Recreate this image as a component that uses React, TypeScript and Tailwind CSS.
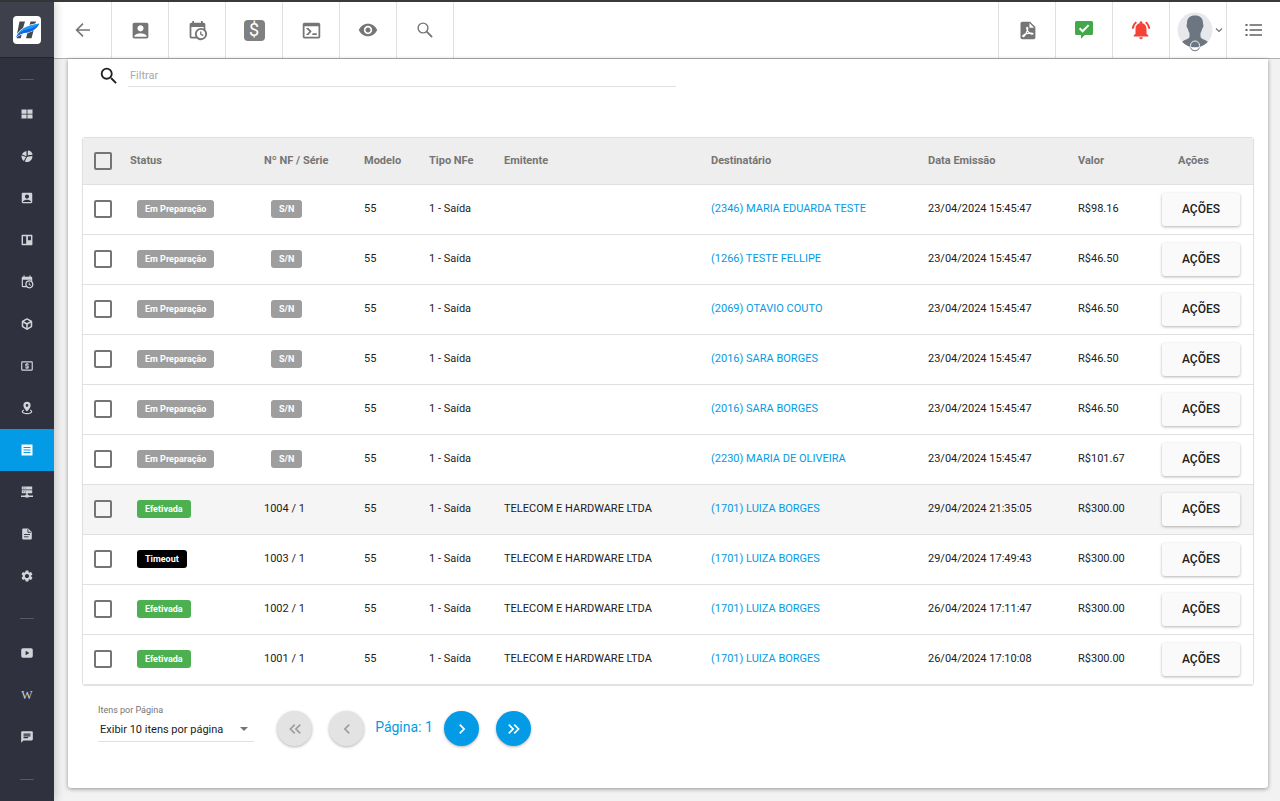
import React, { useState } from 'react';
import {
    MdAccountBox,
    MdChat,
    MdKeyboardArrowLeft,
    MdKeyboardArrowRight,
    MdKeyboardDoubleArrowLeft,
    MdKeyboardDoubleArrowRight,
    MdLocalAtm,
    MdNotificationsActive,
    MdRemoveRedEye,
    MdSearch,
    MdSettings,
} from 'react-icons/md';
import { FiBox } from 'react-icons/fi';

interface Invoice {
    id: number;
    status: 'Em Preparação' | 'Efetivada' | 'Timeout';
    number: string | null;
    issuer: string;
    recipient: string;
    date: string;
    value: string;
}

const ISSUER = 'TELECOM E HARDWARE LTDA';

const invoices: Invoice[] = [
    { id: 1, status: 'Em Preparação', number: null, issuer: '', recipient: '(2346) MARIA EDUARDA TESTE', date: '23/04/2024 15:45:47', value: 'R$98.16' },
    { id: 2, status: 'Em Preparação', number: null, issuer: '', recipient: '(1266) TESTE FELLIPE', date: '23/04/2024 15:45:47', value: 'R$46.50' },
    { id: 3, status: 'Em Preparação', number: null, issuer: '', recipient: '(2069) OTAVIO COUTO', date: '23/04/2024 15:45:47', value: 'R$46.50' },
    { id: 4, status: 'Em Preparação', number: null, issuer: '', recipient: '(2016) SARA BORGES', date: '23/04/2024 15:45:47', value: 'R$46.50' },
    { id: 5, status: 'Em Preparação', number: null, issuer: '', recipient: '(2016) SARA BORGES', date: '23/04/2024 15:45:47', value: 'R$46.50' },
    { id: 6, status: 'Em Preparação', number: null, issuer: '', recipient: '(2230) MARIA DE OLIVEIRA', date: '23/04/2024 15:45:47', value: 'R$101.67' },
    { id: 7, status: 'Efetivada', number: '1004 / 1', issuer: ISSUER, recipient: '(1701) LUIZA BORGES', date: '29/04/2024 21:35:05', value: 'R$300.00' },
    { id: 8, status: 'Timeout', number: '1003 / 1', issuer: ISSUER, recipient: '(1701) LUIZA BORGES', date: '29/04/2024 17:49:43', value: 'R$300.00' },
    { id: 9, status: 'Efetivada', number: '1002 / 1', issuer: ISSUER, recipient: '(1701) LUIZA BORGES', date: '26/04/2024 17:11:47', value: 'R$300.00' },
    { id: 10, status: 'Efetivada', number: '1001 / 1', issuer: ISSUER, recipient: '(1701) LUIZA BORGES', date: '26/04/2024 17:10:08', value: 'R$300.00' },
];

const badgeColors = {
    'Em Preparação': 'bg-[#9e9e9e]',
    Efetivada: 'bg-[#4caf50]',
    Timeout: 'bg-black',
};

const CalendarClockIcon: React.FC<{ className?: string }> = ({ className }) => (
    <svg viewBox="0 0 24 24" fill="currentColor" className={className}>
        <path d="M15,13H16.5V15.82L18.94,17.23L18.19,18.53L15,16.69V13M19,8H5V19H9.67C9.24,18.09 9,17.07 9,16A7,7 0 0,1 16,9C17.07,9 18.09,9.24 19,9.67V8M5,21C3.89,21 3,20.1 3,19V5C3,3.89 3.89,3 5,3H6V1H8V3H16V1H18V3H19A2,2 0 0,1 21,5V11.1C22.24,12.36 23,14.09 23,16A7,7 0 0,1 16,23C14.09,23 12.36,22.24 11.1,21H5M16,11.15A4.85,4.85 0 0,0 11.15,16C11.15,18.68 13.32,20.85 16,20.85A4.85,4.85 0 0,0 20.85,16C20.85,13.32 18.68,11.15 16,11.15Z" />
    </svg>
);

const ConsoleIcon = () => (
    <svg viewBox="0 0 24 24" fill="currentColor" className="size-[21px]">
        <path d="M20,19V7H4V19H20M20,3A2,2 0 0,1 22,5V19A2,2 0 0,1 20,21H4A2,2 0 0,1 2,19V5C2,3.89 2.9,3 4,3H20M13,17V15H18V17H13M9.58,13L5.57,9H8.4L11.7,12.3C12.09,12.69 12.09,13.33 11.7,13.72L8.42,17H5.59L9.58,13Z" />
    </svg>
);

const BackIcon = () => (
    <svg viewBox="0 0 16 16" fill="none" stroke="currentColor" strokeWidth="1.6" className="size-4">
        <path d="M15 8H2M8 1.6 1.6 8 8 14.4" />
    </svg>
);

const ThinSearchIcon = () => (
    <svg viewBox="0 0 16 16" fill="none" stroke="currentColor" strokeWidth="1.4" className="size-4">
        <circle cx="6" cy="6" r="4.9" />
        <path d="m9.7 9.7 5.4 5.4" strokeWidth="1.9" />
    </svg>
);

const PdfIcon = () => (
    <svg viewBox="0 0 24 24" className="size-[21px]">
        <path fill="currentColor" d="M6,2H15L21,8V20A2,2 0 0,1 19,22H6C4.89,22 4,21.1 4,20V4A2,2 0 0,1 6,2Z" />
        <path fill="#fff" d="M14.200 3.500V8.800h5.300z" />
        <path fill="none" stroke="#fff" strokeWidth="1.5" d="M11.500 8.500c1.200 0 .8 2.700-.4 5.100C10 16 8 19.300 6.800 18.800c-1-.6 1-2.300 4.200-3.200 3.500-1 7.500-.9 7.200.2-.3 1-3.200 0-5-2C11.500 11.800 10.600 8.500 11.500 8.500Z" />
    </svg>
);

const MessageCheckIcon = () => (
    <svg viewBox="0 0 18 18" className="size-[18px]">
        <path fill="#43a84a" d="M1.600 0h14.800A1.600 1.600 0 0 1 18 1.600v10.800a1.600 1.600 0 0 1-1.600 1.600H9.800L6 17.800V14H1.600A1.600 1.600 0 0 1 0 12.400V1.600A1.600 1.600 0 0 1 1.600 0Z" />
        <path fill="none" stroke="#fff" strokeWidth="2" d="m4.600 7.300 3 3 6-6.200" />
    </svg>
);

const ThinListIcon = () => (
    <svg viewBox="0 0 18 14" fill="none" stroke="currentColor" strokeWidth="1.400" className="h-[14px] w-[18px]">
        <path d="M4.500 2H17M4.500 7H17M4.500 12H17" />
        <path d="M.5 2h2M.5 7h2M.5 12h2" strokeWidth="2" />
    </svg>
);

const Avatar = () => (
    <svg viewBox="0 -4 36 44" className="h-11 w-9 shrink-0">
        <circle cx="18" cy="18" r="17.500" fill="#e6e8ec" />
        <path fill="#6c7681" d="M18 3.500c5 0 8 2.500 8 7.500 0 1.200.600 1.600.4 3.200-.2 1.500-1 1.700-1.200 2.500-.4 2-1.200 3.300-1.700 4.300v4c1 2.200 5.500 2.800 7.300 5C27.500 33.500 23 35.500 18 35.500S8.500 33.500 5.200 30c1.800-2.200 6.300-2.800 7.300-5v-4c-.5-1-1.300-2.300-1.700-4.300-.2-.8-1-1-1.200-2.500-.2-1.600.4-2 .4-3.200 0-5 3-7.500 8-7.500Z" />
        <circle cx="18" cy="33.500" r="4.500" fill="none" stroke="#f2f3f5" strokeWidth="1" />
        <path fill="#fff" stroke="#6c7681" strokeWidth="1" d="M13.300 35.500a5 5 0 0 0 9.400 0" />
    </svg>
);

const Logo = () => (
    <svg viewBox="0 0 28 28" className="size-7">
        <rect width="28" height="28" rx="4" fill="#fff" />
        <path fill="#45484e" d="M6.500 5.500h5.500L9.500 14l-5.500 4zM17.500 5.500h5.500l-4.500 16.800H13zM4.500 19.500 9 17l-1.200 5.300H3.500z" />
        <path fill="#fff" d="M2.300 22.500C4.500 13.500 13 8.600 27 6.600c-2 5.600-6.500 9.400-13 10.600-4.600.8-8.200 1.900-11.700 5.300Z" />
        <path fill="#1b9bf8" d="M3 21.300C6 13.500 13.500 9.300 26.200 7.600c-2 4.600-6.200 8-12.200 8.800-4.300.6-8 1.900-11 4.900Z" />
        <path fill="#1565e0" d="M3 21.300c2.800-4.600 7.300-7.200 12.800-8.200 3.700-.7 7.200-2.500 10.400-5.500-2 4.600-6.200 8-12.200 8.800-4.300.6-8 1.900-11 4.900Z" />
    </svg>
);

const sideIcon = 'size-3';

const menuItems: { label: string; icon: React.ReactNode; active?: boolean }[] = [
    {
        label: 'Painel',
        icon: (
            <svg viewBox="0 0 12 12" fill="currentColor" className={sideIcon}>
                <path d="M.5 1.500h5.100v4.200H.5zM6.400 1.500h5.100v4.200H6.400zM.5 6.400h5.100v4.200H.5zM6.400 6.400h5.100v4.200H6.400z" />
            </svg>
        ),
    },
    {
        label: 'Relatórios',
        icon: (
            <svg viewBox="0 0 12 12" fill="currentColor" className={sideIcon}>
                <path d="M6.800.5A5 5 0 0 1 11.600 4.800L6.800 5.200ZM5.500 1.300v4.900L1 4.600A5 5 0 0 1 5.500 1.300ZM.6 5.600 5.100 7 2.700 10.900A5.300 5.300 0 0 1 .6 5.600ZM6.200 6.800l5.100-.8A5.200 5.200 0 0 1 3.700 11.400Z" />
            </svg>
        ),
    },
    { label: 'Clientes', icon: <MdAccountBox className="size-[14px]" /> },
    {
        label: 'Quadros',
        icon: (
            <svg viewBox="0 0 12 12" fill="currentColor" fillRule="evenodd" className={sideIcon}>
                <path d="M1.300.800h9.400a.7.7 0 0 1 .7.700v9a.7.7 0 0 1-.7.700H1.300a.7.7 0 0 1-.7-.7v-9a.7.7 0 0 1 .7-.7ZM2 2.200v7.600h3.200V2.200ZM6.900 2.200v4h3.100v-4Z" />
            </svg>
        ),
    },
    { label: 'Agenda', icon: <CalendarClockIcon className="size-[14px]" /> },
    { label: 'Produtos', icon: <FiBox className="size-3" strokeWidth={3} /> },
    { label: 'Financeiro', icon: <MdLocalAtm className="size-[14px]" /> },
    {
        label: 'Mapa',
        icon: (
            <svg viewBox="0 0 12 14" className="h-[14px] w-3">
                <path fill="currentColor" fillRule="evenodd" d="M6 .8a3.600 3.600 0 0 1 3.600 3.600C9.600 6.800 6 10.400 6 10.400S2.400 6.800 2.400 4.400A3.600 3.600 0 0 1 6 .8Zm0 2.300a1.300 1.300 0 1 0 0 2.600 1.300 1.300 0 0 0 0-2.600Z" />
                <path fill="none" stroke="currentColor" strokeWidth="1.200" d="M2.900 9c-1 .4-1.600.9-1.600 1.500C1.300 11.800 3.400 12.600 6 12.600s4.700-.8 4.700-2.100c0-.6-.6-1.100-1.600-1.500" />
            </svg>
        ),
    },
    {
        label: 'Notas Fiscais',
        active: true,
        icon: (
            <svg viewBox="0 0 12 12" className={sideIcon}>
                <path fill="currentColor" d="M.5.500h11v11H.5z" />
                <path stroke="#039be5" d="M2.500 3.500h7M2.500 6h7M2.500 8.500h7" />
            </svg>
        ),
    },
    {
        label: 'Servidores',
        icon: (
            <svg viewBox="0 0 12 12" fill="currentColor" className={sideIcon}>
                <path d="M.8.500h10.400v3H.8zM.8 4.300h10.400v3H.8zM5.300 7h1.400v2H5.300zM4.300 8.800h3.400v2.800H4.300zM0 9.500h12V11H0z" />
                <path stroke="#2f323e" strokeWidth=".6" d="M2 2h1.200M4 2h1M2 5.800h1.200M4 5.800h1" />
            </svg>
        ),
    },
    {
        label: 'Documentos',
        icon: (
            <svg viewBox="0 0 12 12" className={sideIcon}>
                <path fill="currentColor" d="M2 .5h5.200l3.600 3.600v6.400a1 1 0 0 1-1 1H2.200a1 1 0 0 1-1-1v-9a1 1 0 0 1 1-1Z" />
                <path fill="none" stroke="#2f323e" strokeWidth=".9" d="M6.900 1.200v3.100H10M3 6.500h6M3 8.800h4.500" />
            </svg>
        ),
    },
    { label: 'Configurações', icon: <MdSettings className="size-[14px]" /> },
];

const linkItems = [
    {
        label: 'Vídeos',
        icon: (
            <svg viewBox="0 0 12 12" className={sideIcon}>
                <rect x=".2" y="1.200" width="11.600" height="9.600" rx="1.800" fill="currentColor" />
                <path fill="#2f323e" d="M4.600 3.800v4.400L8.400 6z" />
            </svg>
        ),
    },
    { label: 'Wiki', icon: <span className="font-['Liberation_Serif',serif] text-xs">W</span> },
    { label: 'Chat', icon: <MdChat className="size-[14px]" /> },
];

const Divider = () => <hr className="mx-auto mt-[21px] mb-[13px] w-[14px] border-[#555965]" />;

const SideLink: React.FC<{ label: string; active?: boolean; children: React.ReactNode }> = ({ label, active, children }) => (
    <a
        href="#"
        aria-label={label}
        className={`flex h-[42px] items-center justify-center ${active ? 'bg-[#039be5] text-white' : 'text-[#d3d4da] hover:bg-[#3f424d]'}`}
    >
        {children}
    </a>
);

const Sidebar = () => (
    <aside className="z-10 flex w-[54px] shrink-0 flex-col bg-[#2f323e] shadow-[0_0_10px_rgba(0,0,0,0.25)]">
        <a href="#" aria-label="Início" className="flex h-[58px] items-center justify-center border-t-2 border-b border-t-[#333338] border-b-[#22242d] bg-[#3e414b]">
            <Logo />
        </a>
        <nav>
            <Divider />
            {menuItems.map((item) => (
                <SideLink key={item.label} label={item.label} active={item.active}>
                    {item.icon}
                </SideLink>
            ))}
            <Divider />
            {linkItems.map((item) => (
                <SideLink key={item.label} label={item.label}>
                    {item.icon}
                </SideLink>
            ))}
            <Divider />
        </nav>
    </aside>
);

const toolButton = 'flex w-[57px] items-center justify-center border-l border-[#e0e0e0] text-[#757575]';

const TopBar = () => (
    <header className="flex h-[59px] items-stretch justify-between border-t-2 border-b border-t-[#3a393c] border-b-[#b0b0b0] bg-white">
        <div className="flex border-r border-[#e0e0e0]">
            <button type="button" aria-label="Voltar" className="flex w-[57px] items-center justify-center text-[#757575]"><BackIcon /></button>
            <button type="button" aria-label="Clientes" className={toolButton}><MdAccountBox className="size-[21px]" /></button>
            <button type="button" aria-label="Agenda" className={toolButton}><CalendarClockIcon className="size-[21px]" /></button>
            <button type="button" aria-label="Financeiro" className={toolButton}>
                <span className="flex size-[21px] items-center justify-center rounded bg-[#808080] text-lg leading-none text-white">$</span>
            </button>
            <button type="button" aria-label="Console" className={toolButton}><ConsoleIcon /></button>
            <button type="button" aria-label="Visualizar" className={toolButton}><MdRemoveRedEye className="size-5" /></button>
            <button type="button" aria-label="Pesquisar" className={toolButton}><ThinSearchIcon /></button>
        </div>
        <div className="flex">
            <button type="button" aria-label="PDF" className={toolButton}><PdfIcon /></button>
            <button type="button" aria-label="Mensagens" className={toolButton}><MessageCheckIcon /></button>
            <button type="button" aria-label="Notificações" className={toolButton}><MdNotificationsActive className="size-[22px] text-[#f44336]" /></button>
            <button type="button" aria-label="Perfil" className={`${toolButton} gap-0.5 pl-1`}>
                <Avatar />
                <svg viewBox="0 0 8 8" fill="none" stroke="currentColor" strokeWidth="1.200" className="size-2 shrink-0"><path d="m1 2.500 3 3 3-3" /></svg>
            </button>
            <button type="button" aria-label="Menu" className="flex w-[54px] items-center justify-center border-l border-[#e0e0e0] text-[#616161]"><ThinListIcon /></button>
        </div>
    </header>
);

const Badge: React.FC<{ color: string; children: React.ReactNode }> = ({ color, children }) => (
    <span className={`ml-[7px] inline-block rounded-[3px] px-2 text-[9px] leading-[18px] font-bold text-white align-middle ${color}`}>{children}</span>
);

const checkbox = 'block size-[18px] appearance-none rounded-[2px] border-2 border-[#757575] checked:bg-[#039be5]';

const InvoiceTable = () => {
    const [selected, setSelected] = useState<number[]>([]);

    const toggle = (id: number) => {
        setSelected((prev) => (prev.includes(id) ? prev.filter((x) => x !== id) : [...prev, id]));
    };

    const allSelected = selected.length === invoices.length;

    return (
        <div className="rounded-[3px] border border-[#e0e0e0] shadow-[0_1px_1px_rgba(0,0,0,0.12)]">
            <table className="w-full table-fixed text-left text-[11px]">
                <colgroup>
                    <col className="w-[47px]" />
                    <col className="w-[134px]" />
                    <col className="w-[100px]" />
                    <col className="w-[65px]" />
                    <col className="w-[75px]" />
                    <col className="w-[207px]" />
                    <col />
                    <col className="w-[150px]" />
                    <col className="w-[84px]" />
                    <col className="w-[91px]" />
                </colgroup>
                <thead>
                    <tr className="h-[46px] border-b border-[#e0e0e0] bg-[#eeeeee] text-[#757575]">
                        <th className="pl-[11px]">
                            <input
                                type="checkbox"
                                aria-label="Selecionar todos"
                                checked={allSelected}
                                onChange={() => setSelected(allSelected ? [] : invoices.map((i) => i.id))}
                                className={checkbox}
                            />
                        </th>
                        <th>Status</th>
                        <th>Nº NF / Série</th>
                        <th>Modelo</th>
                        <th>Tipo NFe</th>
                        <th>Emitente</th>
                        <th>Destinatário</th>
                        <th>Data Emissão</th>
                        <th>Valor</th>
                        <th className="pl-4">Ações</th>
                    </tr>
                </thead>
                <tbody className="divide-y divide-[#e0e0e0]">
                    {invoices.map((invoice) => (
                        <tr key={invoice.id} className={`h-[50px] ${invoice.id === 7 ? 'bg-[#f5f5f5]' : 'bg-white'}`}>
                            <td className="pl-[11px]">
                                <input
                                    type="checkbox"
                                    aria-label={`Selecionar ${invoice.recipient}`}
                                    checked={selected.includes(invoice.id)}
                                    onChange={() => toggle(invoice.id)}
                                    className={checkbox}
                                />
                            </td>
                            <td><Badge color={badgeColors[invoice.status]}>{invoice.status}</Badge></td>
                            <td>{invoice.number ?? <Badge color="bg-[#9e9e9e]">S/N</Badge>}</td>
                            <td>55</td>
                            <td>1 - Saída</td>
                            <td>{invoice.issuer}</td>
                            <td><a href="#" className="text-[#039be5] hover:underline">{invoice.recipient}</a></td>
                            <td>{invoice.date}</td>
                            <td>{invoice.value}</td>
                            <td>
                                <button
                                    type="button"
                                    className="block h-[33px] w-[78px] rounded-[3px] bg-[#fafafa] text-xs font-medium shadow-[0_1px_3px_rgba(0,0,0,0.3)]"
                                >
                                    AÇÕES
                                </button>
                            </td>
                        </tr>
                    ))}
                </tbody>
            </table>
        </div>
    );
};

const PageButton: React.FC<{ label: string; disabled?: boolean; onClick: () => void; children: React.ReactNode }> = ({ label, disabled, onClick, children }) => (
    <button
        type="button"
        aria-label={label}
        disabled={disabled}
        onClick={onClick}
        className="flex size-[35px] items-center justify-center rounded-full bg-[#039be5] text-xl text-white shadow-[0_1px_3px_rgba(0,0,0,0.3)] disabled:bg-[#e3e3e3] disabled:text-[#9e9e9e]"
    >
        {children}
    </button>
);

const Pagination = () => {
    const [page, setPage] = useState(1);

    return (
        <div className="mt-[19px] flex items-start pl-4">
            <div className="w-[156px]">
                <label htmlFor="page-size" className="block text-[9px] leading-3 text-[#757575]">Itens por Página</label>
                <div className="relative border-b border-[#e0e0e0]">
                    <select id="page-size" className="block h-[25px] w-full appearance-none bg-transparent pt-1 pl-0.5 text-[11px] text-[#212121] outline-none">
                        <option>Exibir 10 itens por página</option>
                        <option>Exibir 25 itens por página</option>
                        <option>Exibir 50 itens por página</option>
                    </select>
                    <svg viewBox="0 0 8 4" fill="#757575" className="pointer-events-none absolute top-[11px] right-[6px] h-1 w-2">
                        <path d="M0 0h8L4 4z" />
                    </svg>
                </div>
            </div>
            <div className="ml-[23px] flex items-center pt-[7px]">
                <PageButton label="Primeira página" disabled={page === 1} onClick={() => setPage(1)}><MdKeyboardDoubleArrowLeft /></PageButton>
                <span className="w-[17px]" />
                <PageButton label="Página anterior" disabled={page === 1} onClick={() => setPage(page - 1)}><MdKeyboardArrowLeft /></PageButton>
                <span className="w-20 pb-1 text-center text-sm text-[#039be5]">Página: {page}</span>
                <PageButton label="Próxima página" onClick={() => setPage(page + 1)}><MdKeyboardArrowRight /></PageButton>
                <span className="w-[17px]" />
                <PageButton label="Última página" onClick={() => setPage(10)}><MdKeyboardDoubleArrowRight /></PageButton>
            </div>
        </div>
    );
};

const App: React.FC = () => {
    const [filter, setFilter] = useState('');

    return (
        <div className="flex min-h-screen bg-[#f2f2f2] font-[Roboto,sans-serif] text-[#212121]">
            <Sidebar />
            <div className="flex min-w-0 flex-1 flex-col">
                <TopBar />
                <main className="mr-3 mb-[13px] ml-[14px] flex-1 rounded-b-[3px] bg-white px-[14px] pb-10 shadow-[0_1px_4px_rgba(0,0,0,0.4)]">
                    <div className="mb-[50px] flex h-7 w-[594px] max-w-full items-end pl-4">
                        <label htmlFor="filter" aria-label="Filtrar" className="mr-2">
                            <MdSearch className="size-[22px]" />
                        </label>
                        <input
                            id="filter"
                            type="text"
                            value={filter}
                            onChange={(e) => setFilter(e.target.value)}
                            placeholder="Filtrar"
                            className="h-6 flex-1 border-b border-[#e0e0e0] px-0.5 pt-0.5 text-[11px] placeholder-[#a8a8a8] outline-none"
                        />
                    </div>
                    <InvoiceTable />
                    <Pagination />
                </main>
            </div>
        </div>
    );
};

export default App;
